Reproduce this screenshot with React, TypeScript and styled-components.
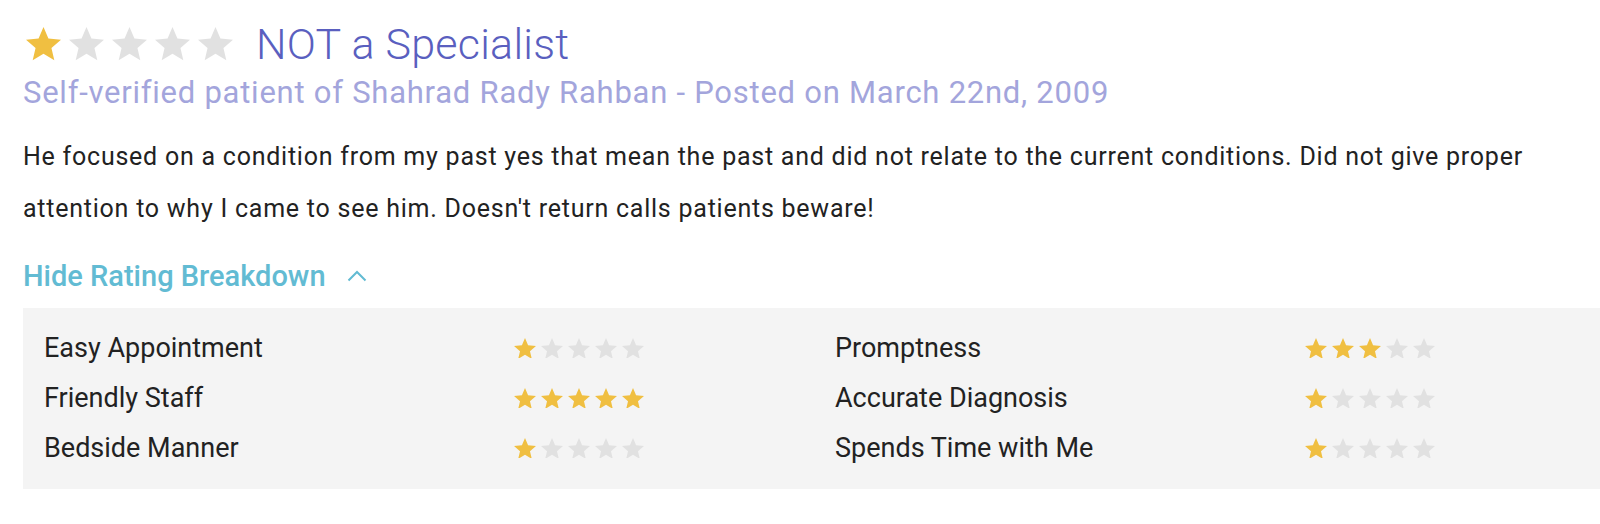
import React from "react";
import styled, { createGlobalStyle } from "styled-components";

const GlobalStyle = createGlobalStyle`
  html, body {
    margin: 0;
    padding: 0;
    background: #ffffff;
  }
  body {
    font-family: Roboto, "Noto Sans", Arial, sans-serif;
  }
`;

const Review = styled.div`
  padding: 20px 23px 0 23px;
`;

const Header = styled.div`
  display: flex;
  align-items: center;
`;

const Stars = styled.div<{ $gap: number }>`
  display: flex;
  gap: ${(p) => p.$gap}px;
`;

const BigStars = styled.div`
  margin-left: 3px;
`;

const Title = styled.h2`
  margin: 0 0 0 23px;
  font-size: 43px;
  font-weight: 300;
  letter-spacing: 0.25px;
  line-height: 48px;
  color: #5a5fbf;
`;

const Subtitle = styled.div`
  font-size: 31px;
  font-weight: 400;
  letter-spacing: 0.75px;
  line-height: 40px;
  color: #a3a5dc;
  margin-top: 5px;
`;

const Body = styled.p`
  margin: 18px 0 0 0;
  font-size: 25px;
  letter-spacing: 0.76px;
  line-height: 52px;
  color: #222222;
`;

const Toggle = styled.button`
  display: flex;
  align-items: center;
  gap: 21px;
  margin-top: 21px;
  padding: 0;
  border: none;
  background: none;
  font-family: inherit;
  font-size: 29px;
  font-weight: 500;
  line-height: 40px;
  color: #62bbd3;
  cursor: pointer;
`;

const Breakdown = styled.div`
  margin-top: 12px;
  margin-right: -23px;
  background: #f4f4f4;
  padding: 15px 0 16px 21px;
  display: grid;
  grid-template-columns: 470px 321px 470px auto;
`;

const Label = styled.div`
  font-size: 27px;
  line-height: 50px;
  color: #222222;
`;

const RowStars = styled.div`
  display: flex;
  align-items: center;
`;

function Star({ size, filled }: { size: number; filled: boolean }) {
  return (
    <svg
      width={size}
      height={size * 0.95}
      viewBox="2 2 20 19"
      fill={filled ? "#f0bf41" : "#e1e1e1"}
    >
      <path d="M12 17.27L18.18 21l-1.64-7.03L22 9.24l-7.19-.61L12 2 9.19 8.63 2 9.24l5.46 4.73L5.82 21z" />
    </svg>
  );
}

function StarRow({ value, size, gap }: { value: number; size: number; gap: number }) {
  return (
    <Stars $gap={gap}>
      {[1, 2, 3, 4, 5].map((i) => (
        <Star key={i} size={size} filled={i <= value} />
      ))}
    </Stars>
  );
}

const ratings = [
  ["Easy Appointment", 1, "Promptness", 3],
  ["Friendly Staff", 5, "Accurate Diagnosis", 1],
  ["Bedside Manner", 1, "Spends Time with Me", 1],
] as const;

export default function App() {
  return (
    <>
      <GlobalStyle />
      <Review>
        <Header>
          <BigStars>
            <StarRow value={1} size={35} gap={8} />
          </BigStars>
          <Title>NOT a Specialist</Title>
        </Header>
        <Subtitle>
          Self-verified patient of Shahrad Rady Rahban - Posted on March 22nd, 2009
        </Subtitle>
        <Body>
          He focused on a condition from my past yes that mean the past and did not relate to
          the current conditions. Did not give proper attention to why I came to see him.
          Doesn't return calls patients beware!
        </Body>
        <Toggle>
          Hide Rating Breakdown
          <svg width="20" height="12" viewBox="0 0 20 12" fill="none">
            <path d="M1.5 10.5L10 2l8.5 8.5" stroke="#62bbd3" strokeWidth="2" />
          </svg>
        </Toggle>
        <Breakdown>
          {ratings.map(([l1, v1, l2, v2]) => (
            <React.Fragment key={l1}>
              <Label>{l1}</Label>
              <RowStars>
                <StarRow value={v1} size={22} gap={5} />
              </RowStars>
              <Label>{l2}</Label>
              <RowStars>
                <StarRow value={v2} size={22} gap={5} />
              </RowStars>
            </React.Fragment>
          ))}
        </Breakdown>
      </Review>
    </>
  );
}
